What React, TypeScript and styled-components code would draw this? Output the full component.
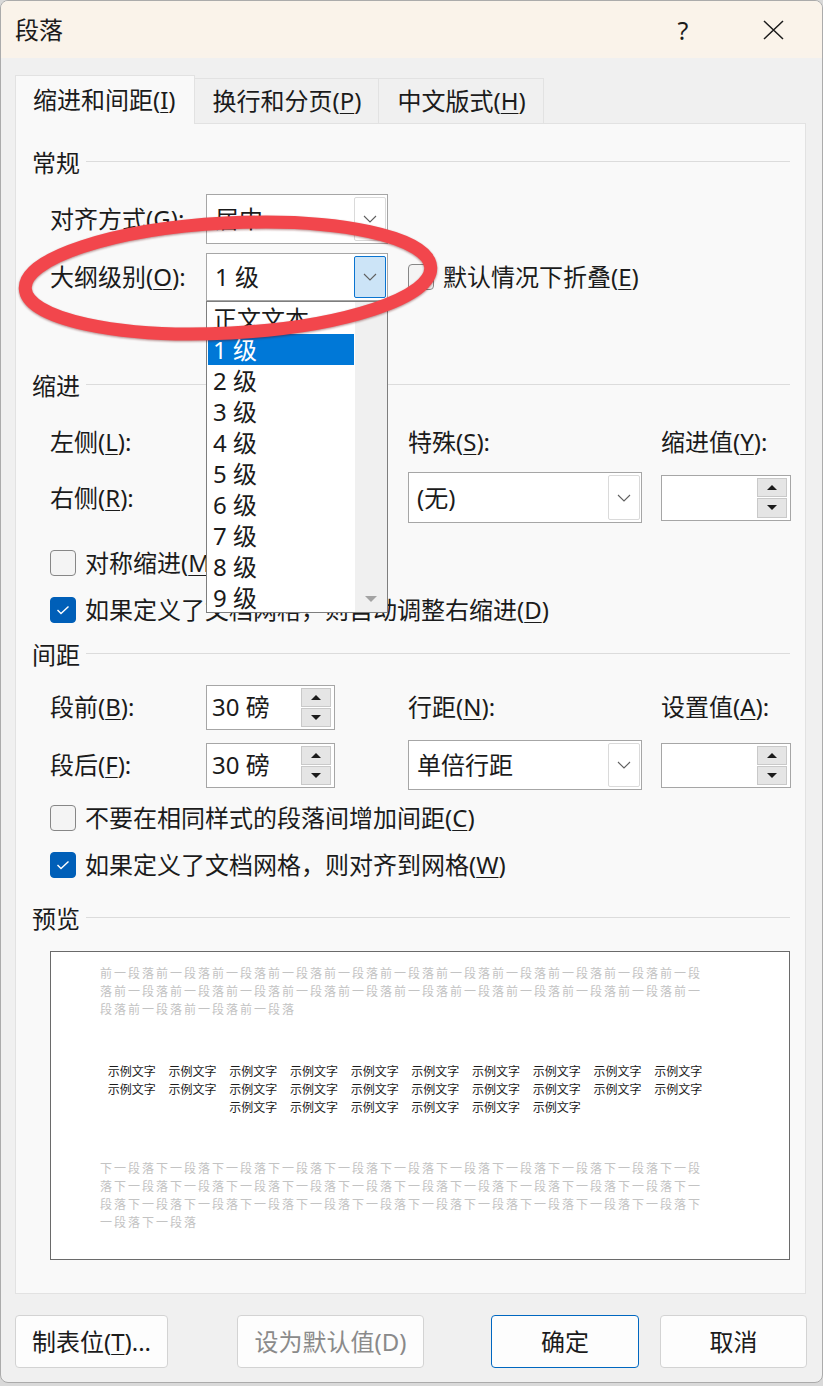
import React from 'react'
import styled, { createGlobalStyle } from 'styled-components'

const GlobalStyle = createGlobalStyle`
  html, body {
    margin: 0;
    padding: 0;
    background: #d9d9d9;
  }
  body {
    font-family: "Noto Sans", "Noto Sans CJK SC", sans-serif;
    color: #1b1b1b;
  }
  * {
    box-sizing: border-box;
  }
  u {
    text-underline-offset: 3px;
    text-decoration-thickness: 1px;
  }
`

const Window = styled.div`
  position: relative;
  width: 823px;
  height: 1383px;
  background: #f0f0f0;
  border: 1px solid #ababab;
  border-radius: 8px;
  overflow: hidden;
  font-size: 24px;
  line-height: 32px;
`

const TitleBar = styled.div`
  display: flex;
  align-items: center;
  height: 57px;
  padding: 0 4px 0 14px;
  background: #faf3ea;
`

const Title = styled.div`
  flex: 1;
`

const CaptionButton = styled.div`
  width: 90px;
  height: 57px;
  display: flex;
  align-items: center;
  justify-content: center;
  font-size: 25px;
`

const TabStrip = styled.div`
  position: relative;
  z-index: 1;
  display: flex;
  align-items: flex-end;
  height: 48px;
  margin-top: 17px;
  padding-left: 14px;
`

const Tab = styled.div<{ $active?: boolean }>`
  display: flex;
  align-items: center;
  height: ${({ $active }) => ($active ? 49 : 45)}px;
  margin-bottom: ${({ $active }) => ($active ? -1 : 0)}px;
  padding: ${({ $active }) => ($active ? '0 18px 0 17px' : '0 17px 0 18px')};
  background: ${({ $active }) => ($active ? '#f9f9f9' : '#f0f0f0')};
  border: 1px solid #e2e2e2;
  border-bottom: none;
  & + & {
    border-left: none;
  }
`

const Panel = styled.div`
  position: relative;
  height: 1171px;
  margin: 0 16px 0 14px;
  padding: 23px 15px 0 16px;
  background: #f9f9f9;
  border: 1px solid #e2e2e2;
`

const SectionHead = styled.div<{ $top: number }>`
  display: flex;
  align-items: center;
  gap: 6px;
  height: 32px;
  margin-top: ${({ $top }) => $top}px;
  &::after {
    content: '';
    flex: 1;
    height: 1px;
    margin-top: -4px;
    background: #dcdcdc;
  }
`

const FormGrid = styled.div<{ $top: number; $rows: string; $gap: number }>`
  display: grid;
  grid-template-columns: 156px 202px 253px 130px;
  grid-template-rows: ${({ $rows }) => $rows};
  row-gap: ${({ $gap }) => $gap}px;
  align-items: center;
  margin: ${({ $top }) => $top}px 0 0 18px;
`

const Label = styled.div`
  white-space: nowrap;
`

const WideCell = styled.div`
  grid-column: 3 / 5;
`

const Combo = styled.div<{ $w: number }>`
  position: relative;
  display: flex;
  align-items: center;
  width: ${({ $w }) => $w}px;
  height: 100%;
  padding-left: 8px;
  background: #fff;
  border: 1px solid #a6a6a6;
`

const ComboValue = styled.span`
  flex: 1;
`

const DropButton = styled.div<{ $open?: boolean }>`
  display: flex;
  align-items: center;
  justify-content: center;
  align-self: stretch;
  width: 32px;
  margin: 2px 1px 2px 0;
  border-radius: 2px;
  border: 1px solid ${({ $open }) => ($open ? '#0a74d0' : '#dadada')};
  background: ${({ $open }) => ($open ? '#cce4f7' : '#fff')};
`

const DropList = styled.div`
  position: absolute;
  z-index: 5;
  top: calc(100% + 1px);
  left: -1px;
  display: flex;
  width: 182px;
  height: 312px;
  background: #fff;
  border: 1px solid #7e7e7e;
`

const DropItems = styled.div`
  flex: 1;
  padding-top: 1px;
`

const DropItem = styled.div<{ $selected?: boolean }>`
  height: 31px;
  margin: 0 1px;
  padding-left: 5px;
  line-height: 31px;
  color: ${({ $selected }) => ($selected ? '#fff' : '#1b1b1b')};
  background: ${({ $selected }) => ($selected ? '#0078d7' : 'transparent')};
`

const ScrollTrack = styled.div`
  display: flex;
  flex-direction: column;
  justify-content: flex-end;
  align-items: center;
  width: 32px;
  padding-bottom: 10px;
  background: #f0f0f0;
`

const ArrowDown = styled.span<{ $color: string; $size: number }>`
  width: 0;
  height: 0;
  border-left: ${({ $size }) => $size}px solid transparent;
  border-right: ${({ $size }) => $size}px solid transparent;
  border-top: ${({ $size }) => $size}px solid ${({ $color }) => $color};
`

const ArrowUp = styled.span<{ $color: string; $size: number }>`
  width: 0;
  height: 0;
  border-left: ${({ $size }) => $size}px solid transparent;
  border-right: ${({ $size }) => $size}px solid transparent;
  border-bottom: ${({ $size }) => $size}px solid ${({ $color }) => $color};
`

const Spin = styled.div<{ $w: number; $h: number }>`
  display: flex;
  width: ${({ $w }) => $w}px;
  height: ${({ $h }) => $h}px;
  padding: 2px 3px 2px 5px;
  background: #fff;
  border: 1px solid #a6a6a6;
`

const SpinValue = styled.span`
  flex: 1;
  display: flex;
  align-items: center;
`

const SpinButtons = styled.div`
  display: flex;
  flex-direction: column;
  gap: 1px;
  width: 30px;
`

const SpinButton = styled.div`
  flex: 1;
  display: flex;
  align-items: center;
  justify-content: center;
  background: #e5e5e5;
  border: 1px solid #c9c9c9;
`

const CheckLine = styled.div<{ $top: number; $indent: number }>`
  display: flex;
  align-items: center;
  gap: 9px;
  height: 40px;
  margin: ${({ $top }) => $top}px 0 0 ${({ $indent }) => $indent}px;
  white-space: nowrap;
`

const Box = styled.span<{ $checked?: boolean }>`
  display: inline-flex;
  align-items: center;
  justify-content: center;
  flex-shrink: 0;
  width: 26px;
  height: 26px;
  border-radius: 4px;
  border: 1px solid ${({ $checked }) => ($checked ? '#005fb8' : '#878787')};
  background: ${({ $checked }) => ($checked ? '#005fb8' : '#f4f4f4')};
`

const Preview = styled.div`
  width: 740px;
  height: 309px;
  margin: 16px 0 0 18px;
  background: #fff;
  border: 1px solid #6a6a6a;
`

const GreyText = styled.div<{ $top: number }>`
  width: 604px;
  margin: ${({ $top }) => $top}px 0 0 49px;
  font-family: "Noto Sans CJK SC", sans-serif;
  font-size: 12px;
  line-height: 18px;
  letter-spacing: 2px;
  color: #c3c3c3;
  word-break: break-all;
`

const SampleText = styled.div`
  display: flex;
  flex-wrap: wrap;
  justify-content: center;
  column-gap: 12.7px;
  width: 600px;
  margin: 44px 0 0 54px;
  font-family: "Noto Sans CJK SC", sans-serif;
  font-size: 12px;
  line-height: 18px;
  color: #1b1b1b;
`

const ButtonRow = styled.div`
  display: flex;
  height: 53px;
  margin: 21px 15px 0 14px;
`

const DialogButton = styled.div<{ $w: number; $left: string; $primary?: boolean; $disabled?: boolean }>`
  display: flex;
  align-items: center;
  justify-content: center;
  width: ${({ $w }) => $w}px;
  margin-left: ${({ $left }) => $left};
  background: #fdfdfd;
  border: 1px solid ${({ $primary }) => ($primary ? '#0067c0' : '#d3d3d3')};
  border-radius: 4px;
  color: ${({ $disabled }) => ($disabled ? '#8a8a8a' : '#1b1b1b')};
`

const Annotation = styled.svg`
  position: absolute;
  z-index: 10;
  top: 0;
  left: 0;
  pointer-events: none;
  filter: drop-shadow(0 1px 1px rgba(90, 0, 0, 0.45));
`

function Chevron() {
  return (
    <svg width="14" height="8" viewBox="0 0 14 8">
      <polyline points="1,1 7,7 13,1" fill="none" stroke="#606060" strokeWidth="1.1" />
    </svg>
  )
}

function Check({ checked, children, top = 0, indent = 18 }: { checked?: boolean; children: React.ReactNode; top?: number; indent?: number }) {
  return (
    <CheckLine $top={top} $indent={indent}>
      <Box $checked={checked}>
        {checked && (
          <svg width="14" height="10" viewBox="0 0 14 10">
            <polyline points="1.5,5 5,8.5 12.5,1.5" fill="none" stroke="#fff" strokeWidth="1.4" />
          </svg>
        )}
      </Box>
      <span>{children}</span>
    </CheckLine>
  )
}

function Spinner({ value = '', w = 130, h = 45 }: { value?: string; w?: number; h?: number }) {
  return (
    <Spin $w={w} $h={h}>
      <SpinValue>{value}</SpinValue>
      <SpinButtons>
        <SpinButton>
          <ArrowUp $color="#1b1b1b" $size={5} />
        </SpinButton>
        <SpinButton>
          <ArrowDown $color="#1b1b1b" $size={5} />
        </SpinButton>
      </SpinButtons>
    </Spin>
  )
}

const levels = ['正文文本', '1 级', '2 级', '3 级', '4 级', '5 级', '6 级', '7 级', '8 级', '9 级']

export default function App() {
  const before = '前一段落'.repeat(25)
  const after = '下一段落'.repeat(34)
  const samples = Array.from({ length: 26 }, () => '示例文字')

  return (
    <>
      <GlobalStyle />
      <Window>
        <TitleBar>
          <Title>段落</Title>
          <CaptionButton>?</CaptionButton>
          <CaptionButton>
            <svg width="21" height="20" viewBox="0 0 21 20">
              <path d="M1 1 L20 19 M20 1 L1 19" stroke="#1b1b1b" strokeWidth="1.5" />
            </svg>
          </CaptionButton>
        </TitleBar>

        <TabStrip>
          <Tab $active>
            缩进和间距(<u>I</u>)
          </Tab>
          <Tab>
            换行和分页(<u>P</u>)
          </Tab>
          <Tab>
            中文版式(<u>H</u>)
          </Tab>
        </TabStrip>

        <Panel>
          <SectionHead $top={0}>常规</SectionHead>
          <FormGrid $top={15} $rows="50px 48px" $gap={9}>
            <Label>
              对齐方式(<u>G</u>):
            </Label>
            <Combo $w={182}>
              <ComboValue>居中</ComboValue>
              <DropButton>
                <Chevron />
              </DropButton>
            </Combo>
            <span />
            <span />
            <Label>
              大纲级别(<u>O</u>):
            </Label>
            <Combo $w={182}>
              <ComboValue>1 级</ComboValue>
              <DropButton $open>
                <Chevron />
              </DropButton>
              <DropList>
                <DropItems>
                  {levels.map((l, i) => (
                    <DropItem key={l} $selected={i === 1}>
                      {l}
                    </DropItem>
                  ))}
                </DropItems>
                <ScrollTrack>
                  <ArrowDown $color="#a3a3a3" $size={6} />
                </ScrollTrack>
              </DropList>
            </Combo>
            <WideCell>
              <Check indent={0}>
                默认情况下折叠(<u>E</u>)
              </Check>
            </WideCell>
          </FormGrid>

          <SectionHead $top={69}>缩进</SectionHead>
          <FormGrid $top={17} $rows="46px 51px" $gap={7}>
            <Label>
              左侧(<u>L</u>):
            </Label>
            <Spinner w={129} />
            <Label>
              特殊(<u>S</u>):
            </Label>
            <Label>
              缩进值(<u>Y</u>):
            </Label>
            <Label>
              右侧(<u>R</u>):
            </Label>
            <Spinner w={129} />
            <Combo $w={234}>
              <ComboValue>(无)</ComboValue>
              <DropButton>
                <Chevron />
              </DropButton>
            </Combo>
            <Spinner w={130} h={46} />
          </FormGrid>
          <Check top={20}>
            对称缩进(<u>M</u>)
          </Check>
          <Check checked top={7}>
            如果定义了文档网格，则自动调整右缩进(<u>D</u>)
          </Check>

          <SectionHead $top={9}>间距</SectionHead>
          <FormGrid $top={13} $rows="46px 50px" $gap={10}>
            <Label>
              段前(<u>B</u>):
            </Label>
            <Spinner value="30 磅" w={129} />
            <Label>
              行距(<u>N</u>):
            </Label>
            <Label>
              设置值(<u>A</u>):
            </Label>
            <Label>
              段后(<u>F</u>):
            </Label>
            <Spinner value="30 磅" w={129} />
            <Combo $w={234}>
              <ComboValue>单倍行距</ComboValue>
              <DropButton>
                <Chevron />
              </DropButton>
            </Combo>
            <Spinner w={130} />
          </FormGrid>
          <Check top={8}>
            不要在相同样式的段落间增加间距(<u>C</u>)
          </Check>
          <Check checked top={7}>
            如果定义了文档网格，则对齐到网格(<u>W</u>)
          </Check>

          <SectionHead $top={18}>预览</SectionHead>
          <Preview>
            <GreyText $top={12}>{before}</GreyText>
            <SampleText>
              {samples.map((s, i) => (
                <span key={i}>{s}</span>
              ))}
            </SampleText>
            <GreyText $top={43}>{after}</GreyText>
          </Preview>
        </Panel>

        <ButtonRow>
          <DialogButton $w={153} $left="0">
            制表位(<u>T</u>)...
          </DialogButton>
          <DialogButton $w={187} $left="69px" $disabled>
            设为默认值(D)
          </DialogButton>
          <DialogButton $w={148} $left="auto" $primary>
            确定
          </DialogButton>
          <DialogButton $w={147} $left="21px">
            取消
          </DialogButton>
        </ButtonRow>

        <Annotation width="823" height="420" viewBox="0 0 823 420">
          <ellipse
            cx="227"
            cy="277"
            rx="203"
            ry="55"
            transform="rotate(-3 227 277)"
            fill="none"
            stroke="#f2464c"
            strokeWidth="13"
          />
        </Annotation>
      </Window>
    </>
  )
}
